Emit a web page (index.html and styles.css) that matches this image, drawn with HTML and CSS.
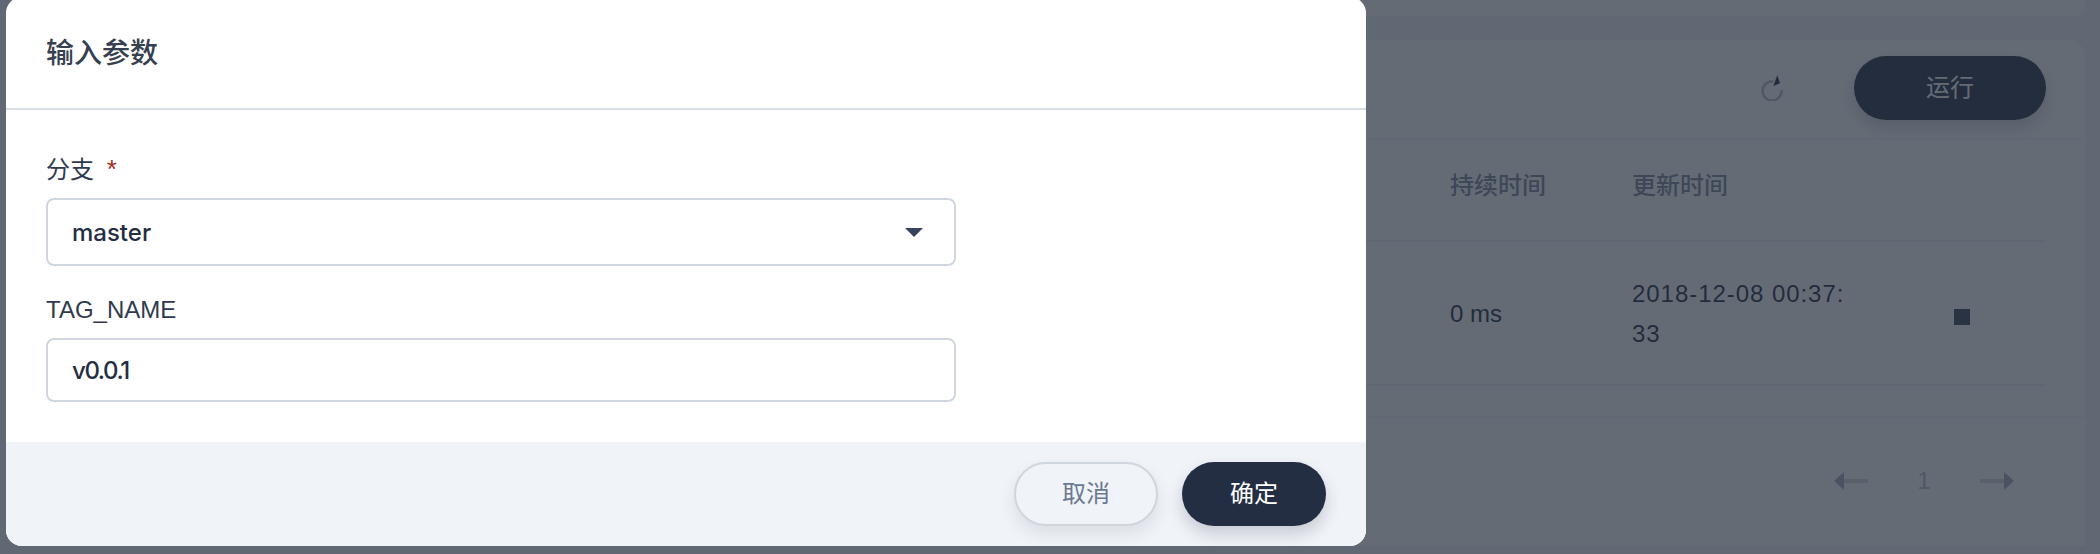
FILE: index.html
```html
<!DOCTYPE html>
<html lang="en">
<head>
    <meta charset="UTF-8">
    <meta name="viewport" content="width=device-width, initial-scale=1.0">
    <title>输入参数</title>
    <link rel="stylesheet" href="styles.css">
</head>
<body>

    <!-- Page behind the dialog -->
    <div class="page">
        <div class="top-card"></div>
        <section class="card">
            <div class="toolbar">
                <svg class="refresh" width="22" height="26" viewBox="0 0 22 26">
                    <path class="refresh-arc" d="M12.5 6.6A9.5 9.5 0 1 0 20.5 15"/>
                    <path class="refresh-arrow" d="M16.3 0.3L19 8.3L12.3 11Z"/>
                </svg>
                <button class="btn btn-primary run">运行</button>
            </div>
            <div class="table">
                <div class="row row-head">
                    <div class="col-time">持续时间</div>
                    <div class="col-date">更新时间</div>
                    <div class="col-action"></div>
                </div>
                <div class="row row-body">
                    <div class="col-time">0 ms</div>
                    <div class="col-date">2018-12-08 00:37:33</div>
                    <div class="col-action"><span class="stop"></span></div>
                </div>
            </div>
            <div class="pager">
                <svg width="34" height="18" viewBox="0 0 34 18">
                    <path class="pager-head" d="M10 0V18L0 9Z"/>
                    <path class="pager-line" d="M10 7H34V11H10Z"/>
                </svg>
                <span class="pager-num">1</span>
                <svg width="34" height="18" viewBox="0 0 34 18">
                    <path class="pager-head" d="M24 0V18L34 9Z"/>
                    <path class="pager-line" d="M24 7H0V11H24Z"/>
                </svg>
            </div>
        </section>
    </div>

    <div class="overlay"></div>

    <!-- Dialog -->
    <main class="modal">
        <header class="modal-header">
            <h1>输入参数</h1>
        </header>
        <div class="modal-body">
            <div class="form-item">
                <label>分支 <span class="required">*</span></label>
                <div class="select">
                    <span>master</span>
                    <span class="caret"></span>
                </div>
            </div>
            <div class="form-item">
                <label>TAG_NAME</label>
                <input class="input" type="text" value="v0.0.1">
            </div>
        </div>
        <footer class="modal-footer">
            <button class="btn btn-default">取消</button>
            <button class="btn btn-primary">确定</button>
        </footer>
    </main>

</body>
</html>
```

FILE: styles.css
```css
/* General page styling */
* {
    box-sizing: border-box;
}

body {
    margin: 0;
    height: 554px;
    overflow: hidden;
    background: #eff4f9;
    color: #242e42;
    font-family: 'Liberation Sans', 'Noto Sans CJK SC', sans-serif;
    font-size: 24px;
}

/* Page behind the dialog */
.page {
    padding-right: 15px;
    margin-left: 400px;
}

.top-card {
    height: 16px;
    background: #fff;
    border-radius: 0 0 8px 8px;
}

.card {
    height: 506px;
    margin-top: 24px;
    background: #fff;
    border-radius: 16px 16px 0 0;
}

.toolbar {
    height: 98px;
    padding-right: 39px;
    display: flex;
    justify-content: flex-end;
    align-items: flex-start;
    gap: 71px;
}

.refresh {
    margin-top: 35px;
}

.refresh-arc {
    fill: none;
    stroke: #b5bfca;
    stroke-width: 2.5;
}

.refresh-arrow {
    fill: #242e42;
}

.btn.run {
    margin-top: 16px;
    width: 192px;
    background: #253048;
}

.table {
    height: 280px;
    padding-right: 40px;
    border-top: 2px solid #f7f8fb;
    border-bottom: 2px solid #f7f8fb;
}

.row {
    display: flex;
    justify-content: flex-end;
    border-bottom: 2px solid #edf0f4;
}

.row-head {
    height: 102px;
    padding-top: 30px;
    line-height: 32px;
    color: #79879c;
    font-weight: 500;
}

.row-body {
    height: 144px;
    padding-top: 1px;
    align-items: center;
    line-height: 40px;
}

.col-time {
    width: 182px;
}

.col-date {
    width: 218px;
    margin-right: 12px;
    word-break: break-all;
    letter-spacing: 0.95px;
}

.row-head .col-date {
    letter-spacing: 0;
}

.col-action {
    width: 183px;
    padding-left: 92px;
    display: flex;
}

.stop {
    width: 16px;
    height: 16px;
    margin-top: 6px;
    background: #36435c;
}

.pager {
    height: 126px;
    padding-right: 71px;
    display: flex;
    justify-content: flex-end;
    align-items: center;
    color: #b5bfca;
}

.pager-head {
    fill: #a0adbb;
}

.pager-line {
    fill: #d3dae2;
}

.pager-num {
    width: 112px;
    text-align: center;
}

.overlay {
    position: absolute;
    top: 0;
    left: 0;
    width: 100%;
    height: 100%;
    background: rgba(35, 44, 58, 0.7);
}

/* Dialog */
.modal {
    position: absolute;
    top: -3px;
    left: 6px;
    width: 1360px;
    height: 549px;
    display: flex;
    flex-direction: column;
    background: #fff;
    border-radius: 16px;
    overflow: hidden;
}

.modal-header {
    height: 113px;
    padding: 39px 40px 0;
    border-bottom: 2px solid #d8dee5;
}

h1 {
    margin: 0;
    font-size: 28px;
    line-height: 36px;
    font-weight: 500;
    color: #36404f;
}

.modal-body {
    flex: 1;
    padding: 43px 40px 0;
}

.form-item {
    margin-bottom: 28px;
}

label {
    display: block;
    line-height: 32px;
    margin-bottom: 12px;
    color: #2f3a4f;
}

.required {
    margin-left: 6px;
    color: #a8281c;
    font-size: 26px;
}

.select, .input {
    display: flex;
    align-items: center;
    justify-content: space-between;
    width: 910px;
    padding: 0 31px 0 24px;
    background: #fff;
    border: 2px solid #d0d6e0;
    border-radius: 8px;
    color: #242e42;
    font-family: Inter, 'Noto Sans CJK SC', sans-serif;
    font-size: 24px;
    font-weight: 500;
}

.select {
    height: 68px;
}

.input {
    height: 64px;
    outline: none;
    letter-spacing: -1.4px;
}

.caret {
    width: 0;
    height: 0;
    border-left: 9px solid transparent;
    border-right: 9px solid transparent;
    border-top: 9px solid #36435c;
}

.modal-footer {
    height: 104px;
    padding: 20px 40px;
    display: flex;
    justify-content: flex-end;
    gap: 24px;
    background: #f0f3f8;
}

.btn {
    height: 64px;
    width: 144px;
    padding: 0 0 5px;
    border-radius: 32px;
    font-family: 'Liberation Sans', 'Noto Sans CJK SC', sans-serif;
    font-size: 24px;
}

.btn-default {
    background: #f0f3f8;
    border: 2px solid #d0d6de;
    color: #6b7a90;
    box-shadow: 0 8px 16px rgba(36, 46, 66, 0.1);
}

.btn-primary {
    background: #242e42;
    border: none;
    color: #fff;
    box-shadow: 0 8px 16px rgba(36, 46, 66, 0.2);
}
```
